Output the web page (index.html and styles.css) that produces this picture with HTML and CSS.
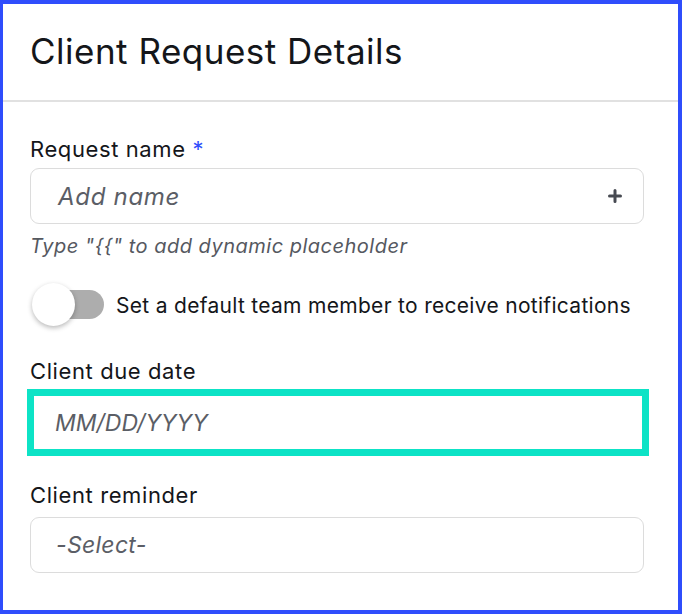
FILE: index.html
```html
<html lang="en">
  <head>
    <meta charset="UTF-8" />
    <meta name="viewport" content="width=device-width, initial-scale=1.0" />
    <title>Client Request Details</title>

    <link rel="stylesheet" href="styles.css">
  </head>
  <body>
    <div class="panel">
      <header class="panel_head">
        <h1>Client Request Details</h1>
      </header>

      <div class="panel_body">
        <label class="field_label">Request name <span class="required">*</span></label>
        <div class="text_box">
          <span class="placeholder name_placeholder">Add name</span>
          <svg class="plus_icon" width="14" height="14" viewBox="0 0 14 14">
            <path d="M7 1.5v11M1.5 7h11" stroke="#474a52" stroke-width="3" stroke-linecap="round" />
          </svg>
        </div>
        <p class="hint">Type "{{" to add dynamic placeholder</p>

        <div class="toggle_row">
          <span class="toggle">
            <span class="toggle_track"></span>
            <span class="toggle_knob"></span>
          </span>
          <span class="toggle_text">Set a default team member to receive notifications</span>
        </div>

        <label class="field_label due_label">Client due date</label>
        <div class="date_box">
          <span class="placeholder">MM/DD/YYYY</span>
        </div>

        <label class="field_label reminder_label">Client reminder</label>
        <div class="text_box select_box">
          <span class="placeholder select_placeholder">-Select-</span>
        </div>
      </div>
    </div>
  </body>
</html>
```

FILE: styles.css
```css
* {
  box-sizing: border-box;
}

body {
  margin: 0;
  font-family: Inter, "Noto Sans", sans-serif;
  color: #14161a;
  background: #fff;
}

.panel {
  width: 682px;
  height: 614px;
  border: 4px solid #2f4dfc;
  border-left-width: 3px;
  background: #fff;
}

.panel_head {
  height: 98px;
  border-bottom: 2px solid #e1e1e1;
  padding-left: 27px;
}

.panel_head h1 {
  margin: 0;
  font-size: 35px;
  font-weight: 400;
  line-height: 94px;
  letter-spacing: 0.5px;
}

.panel_body {
  padding: 32px 34px 0 27px;
}

.field_label {
  display: block;
  font-size: 22px;
  line-height: 30px;
  letter-spacing: 0.6px;
  color: #14161a;
}

.required {
  color: #2f4dfc;
}

.text_box {
  display: flex;
  align-items: center;
  justify-content: space-between;
  height: 56px;
  margin-top: 4px;
  padding: 0 21px 0 27px;
  border: 1px solid #dcdcdc;
  border-radius: 9px;
}

.placeholder {
  font-size: 23px;
  font-style: italic;
  color: #5b5e66;
}

.name_placeholder {
  font-size: 24px;
  letter-spacing: 0.7px;
}

.select_placeholder {
  letter-spacing: 0.3px;
}

.hint {
  margin: 10px 0 0;
  font-size: 20px;
  font-style: italic;
  line-height: 24px;
  letter-spacing: 0.5px;
  color: #55585f;
}

.toggle_row {
  display: flex;
  align-items: center;
  gap: 12px;
  height: 44px;
  margin-top: 25px;
}

.toggle {
  position: relative;
  width: 74px;
  height: 44px;
  flex-shrink: 0;
}

.toggle_track {
  position: absolute;
  left: 9px;
  top: 7px;
  width: 65px;
  height: 29px;
  border-radius: 15px;
  background: #adadad;
}

.toggle_knob {
  position: absolute;
  left: 2px;
  top: 0;
  width: 43px;
  height: 43px;
  border-radius: 50%;
  background: #fff;
  box-shadow: 0 2px 5px rgba(0, 0, 0, 0.28);
}

.toggle_text {
  font-size: 21px;
  letter-spacing: 0.3px;
  color: #14161a;
}

.due_label {
  margin-top: 29px;
}

.date_box {
  display: flex;
  align-items: center;
  height: 67px;
  margin: 3px -5px 0 -3px;
  padding-left: 21px;
  border: 7px solid #0de3c6;
}

.reminder_label {
  margin-top: 24px;
}

.select_box {
  margin-top: 7px;
  padding-left: 25px;
}
```
